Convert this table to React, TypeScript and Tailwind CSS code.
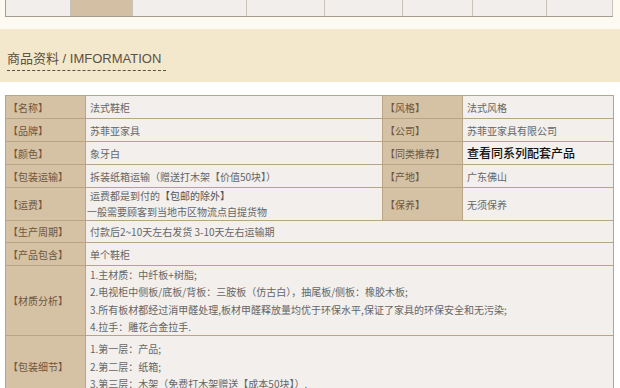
const tabs = [65, 62, 114, 79, 78, 70, 74, 66];

const label = 'border border-[#b9a486] bg-[#d5c1a3] pl-[2px] text-[#6e5640] align-middle';
const value = 'border border-[#b9a486] bg-[#f2efec] pl-[4px] text-[#666] align-middle';

export default function App() {
  return (
    <div className="w-[620px] h-[388px] overflow-hidden bg-white" style={{ fontFamily: '"Noto Sans CJK SC", sans-serif' }}>
      {/* cut-off tab strip */}
      <div className="bg-[#fdfbf1] pb-[12px]">
        <div className="ml-[5px] flex h-[17px] w-[608px] border-b border-l border-[#a59d90]">
          {tabs.map((w, i) => (
            <div
              key={i}
              style={{ width: w }}
              className={
                'h-full border-r border-[#c9c3ba] ' + (i === 1 ? 'bg-[#d3c0a4]' : 'bg-[#f1eeec]')
              }
            />
          ))}
        </div>
      </div>

      {/* section title */}
      <div className="bg-[#f3e8cb] pt-[22px] pb-[11px] pl-[7px]">
        <div
          className="w-fit border-b border-dashed border-[#5c5047] pb-[3px] pr-[5px] text-[13px] leading-[16px] text-[#5c5047]"
          style={{ fontFamily: '"Liberation Sans", "Noto Sans CJK SC", sans-serif' }}
        >
          商品资料 / IMFORMATION
        </div>
      </div>

      <table className="mt-[13px] ml-[5px] w-[608px] table-fixed border-collapse text-[10px] leading-[17px]">
        <colgroup>
          <col className="w-[80px]" />
          <col className="w-[297px]" />
          <col className="w-[80px]" />
          <col className="w-[151px]" />
        </colgroup>
        <tbody>
          <tr className="h-[23px]">
            <td className={label}>【名称】</td>
            <td className={value}>法式鞋柜</td>
            <td className={label}>【风格】</td>
            <td className={value}>法式风格</td>
          </tr>
          <tr className="h-[23px]">
            <td className={label}>【品牌】</td>
            <td className={value}>苏菲亚家具</td>
            <td className={label}>【公司】</td>
            <td className={value}>苏菲亚家具有限公司</td>
          </tr>
          <tr className="h-[23px]">
            <td className={label}>【颜色】</td>
            <td className={value}>象牙白</td>
            <td className={label}>【同类推荐】</td>
            <td className={value}>
              <span className="text-[12px] font-medium text-[#111]">查看同系列配套产品</span>
            </td>
          </tr>
          <tr className="h-[23px]">
            <td className={label}>【包装运输】</td>
            <td className={value}>拆装纸箱运输（赠送打木架【价值50块】）</td>
            <td className={label}>【产地】</td>
            <td className={value}>广东佛山</td>
          </tr>
          <tr>
            <td className={label}>【运费】</td>
            <td className={value + ' leading-[16px]'}>
              运费都是到付的<span className="text-[#555]">【包邮的除外】</span>
              <br />
              <span className="-ml-[3px]">一般需要顾客到当地市区物流点自提货物</span>
            </td>
            <td className={label}>【保养】</td>
            <td className={value}>无须保养</td>
          </tr>
          <tr className="h-[22px]">
            <td className={label}>【生产周期】</td>
            <td className={value} colSpan={3}>付款后2~10天左右发货 3-10天左右运输期</td>
          </tr>
          <tr className="h-[23px]">
            <td className={label}>【产品包含】</td>
            <td className={value} colSpan={3}>单个鞋柜</td>
          </tr>
          <tr>
            <td className={label}>【材质分析】</td>
            <td className={value + ' leading-[17.25px]'} colSpan={3}>
              1.主材质：中纤板+树脂;
              <br />
              2.电视柜中侧板/底板/背板：三胺板（仿古白），抽尾板/侧板：橡胶木板;
              <br />
              3.所有板材都经过消甲醛处理,板材甲醛释放量均优于环保水平,保证了家具的环保安全和无污染;
              <br />
              4.拉手：雕花合金拉手.
            </td>
          </tr>
          <tr>
            <td className={label}>【包装细节】</td>
            <td className={value + ' py-[4px] leading-[17.5px]'} colSpan={3}>
              1.第一层：产品;
              <br />
              2.第二层：纸箱;
              <br />
              3.第三层：木架（免费打木架赠送【成本50块】）.
            </td>
          </tr>
        </tbody>
      </table>
    </div>
  );
}
